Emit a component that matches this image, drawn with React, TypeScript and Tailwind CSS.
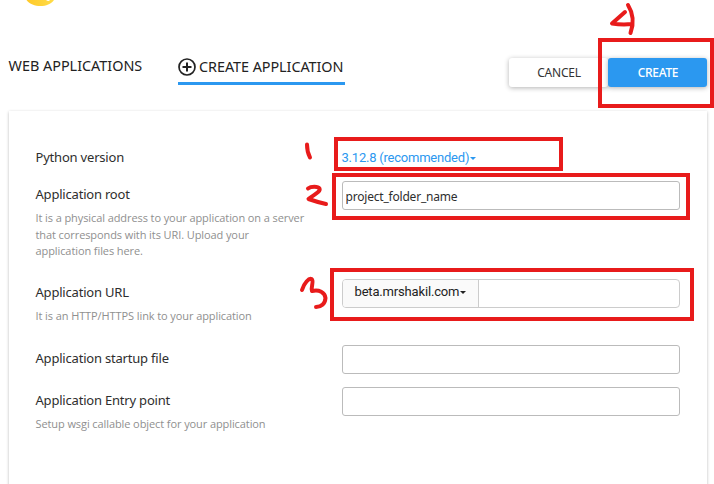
import type { ReactNode } from "react";

type FieldProps = { label: string; help?: string; className: string; children: ReactNode };

function Field({ label, help, className, children }: FieldProps) {
  return (
    <div className={`flex ${className}`}>
      <div className="w-[306px] shrink-0">
        <div className="-ml-[0.5px] pt-[3px] font-['Noto_Sans',sans-serif] text-[13px] leading-[20px] tracking-[-0.2px] text-[#2e2e2e]">{label}</div>
        {help && (
          <p className="-ml-[0.5px] mt-[6px] w-[270px] font-['Open_Sans',sans-serif] text-[11px] leading-[16.5px] tracking-[-0.09px] text-[#8f8f8f]">{help}</p>
        )}
      </div>
      <div className="w-[338px]">{children}</div>
    </div>
  );
}

function Caret({ className }: { className: string }) {
  return <span className={`inline-block h-0 w-0 border-x-[3px] border-t-[3px] border-x-transparent ${className}`} />;
}

const inputClass =
  "block h-[29px] w-full rounded-[3px] border border-[#bbb] bg-white px-[2.5px] pt-[2px] font-['Noto_Sans',sans-serif] text-[12px] tracking-[-0.2px] text-[#2e2e2e] outline-none";

export default function App() {
  return (
    <div className="relative h-[484px] w-[714px] overflow-hidden bg-white">
      <header className="flex h-[58px] items-start pl-[26px]">
        <svg width="30" height="8" viewBox="0 0 30 8">
          <defs>
            <linearGradient id="sun" x1="0" x2="1">
              <stop stopColor="#ffc928" />
              <stop offset="1" stopColor="#ffdc48" />
            </linearGradient>
          </defs>
          <path d="M0.5 0H28C25 4 20 6 14.5 6S3.5 4 0.5 0Z" fill="url(#sun)" />
          <path d="M20 0q2.500 2 4 0Z" fill="#fff" />
        </svg>
      </header>

      <div className="flex h-[53px] pl-[9px] pr-[7px]">
        <nav className="flex font-['Noto_Sans',sans-serif] text-[14.4px] leading-[16px] text-[#222]">
          <span className="-ml-[0.5px] w-[169.5px] whitespace-nowrap">WEB APPLICATIONS</span>
          <span className="flex h-[27px] w-[167px] items-start whitespace-nowrap border-b-[3px] border-[#2b98f0]">
            <svg className="mr-[2px] shrink-0" width="19" height="19" viewBox="0 0 19 19" fill="none" stroke="#222">
              <circle cx="9" cy="9" r="8" strokeWidth="1.7" />
              <path d="M9 4.5v9M4.5 9h9" strokeWidth="2" />
            </svg>
            <span className="pt-px tracking-[-0.05px]">CREATE APPLICATION</span>
          </span>
        </nav>
        <div className="ml-auto flex font-['Noto_Sans',sans-serif] text-[12px] tracking-[-0.2px]">
          <button className="h-[29px] w-[99px] rounded-[3px] bg-white pl-px text-[#333] shadow-[0_1px_5px_rgba(0,0,0,0.3)]">CANCEL</button>
          <button className="h-[29px] w-[99px] rounded-[3px] bg-[#2b98f0] pl-px font-medium tracking-[-0.3px] text-white shadow-[0_1px_5px_rgba(0,0,0,0.3)]">CREATE</button>
        </div>
      </div>

      <main className="ml-[9px] h-[400px] w-[698px] pl-[27px] pt-[33px] shadow-[0_1px_3px_rgba(0,0,0,0.27)]">
        <Field label="Python version" className="h-[37px]">
          <div className="-ml-[0.5px] flex h-[28px] items-center font-['Roboto',sans-serif] text-[13px] tracking-[-0.22px] text-[#2b98f0]">
            3.12.8 (recommended)
            <Caret className="ml-[1px] border-t-[#2b98f0]" />
          </div>
        </Field>
        <Field
          label="Application root"
          help="It is a physical address to your application on a server that corresponds with its URI. Upload your application files here."
          className="h-[98px]"
        >
          <input className={inputClass} defaultValue="project_folder_name" />
        </Field>
        <Field label="Application URL" help="It is an HTTP/HTTPS link to your application" className="h-[66px]">
          <div className="flex h-[29px] overflow-hidden rounded-[4px] border border-[#ccc]">
            <div className="flex w-[136px] items-center border-r border-[#ccc] bg-[#fafafa] pb-[3px] pl-[11.5px] font-['Roboto',sans-serif] text-[13px] tracking-[-0.17px] text-[#222]">
              beta.mrshakil.com
              <Caret className="ml-[1px] border-t-[#222]" />
            </div>
            <input className="min-w-0 flex-1 outline-none" />
          </div>
        </Field>
        <Field label="Application startup file" className="h-[42px]">
          <input className={inputClass} />
        </Field>
        <Field label="Application Entry point" help="Setup wsgi callable object for your application" className="h-[60px]">
          <input className={inputClass} />
        </Field>
      </main>

      <svg
        className="pointer-events-none absolute left-0 top-0"
        width="714"
        height="484"
        viewBox="0 0 714 484"
        fill="none"
        stroke="#e81b1b"
        strokeWidth="4"
      >
        <rect x="336" y="139" width="225" height="30" />
        <rect x="334" y="175" width="354" height="43" />
        <rect x="332" y="270" width="360" height="49" />
        <rect x="600" y="40" width="112" height="66" />
        <g strokeLinecap="round" strokeLinejoin="round">
          <path d="M307 144.500Q307 152 310 157.500" />
          <path d="M308 188.500C311 186 318 186 319.500 188.500C321 192 313 195 308.500 199Q317 202 326 204" />
          <path d="M302 290C304 283 309 278 311.500 279C314.500 281 310.500 287 312 291C319 289.500 325 292 325.500 298C325 304 321 307 316 307" />
          <path d="M625 12L612 23.500Q622 25 632 24M628 5Q636 18 630.500 33" />
        </g>
      </svg>
    </div>
  );
}
